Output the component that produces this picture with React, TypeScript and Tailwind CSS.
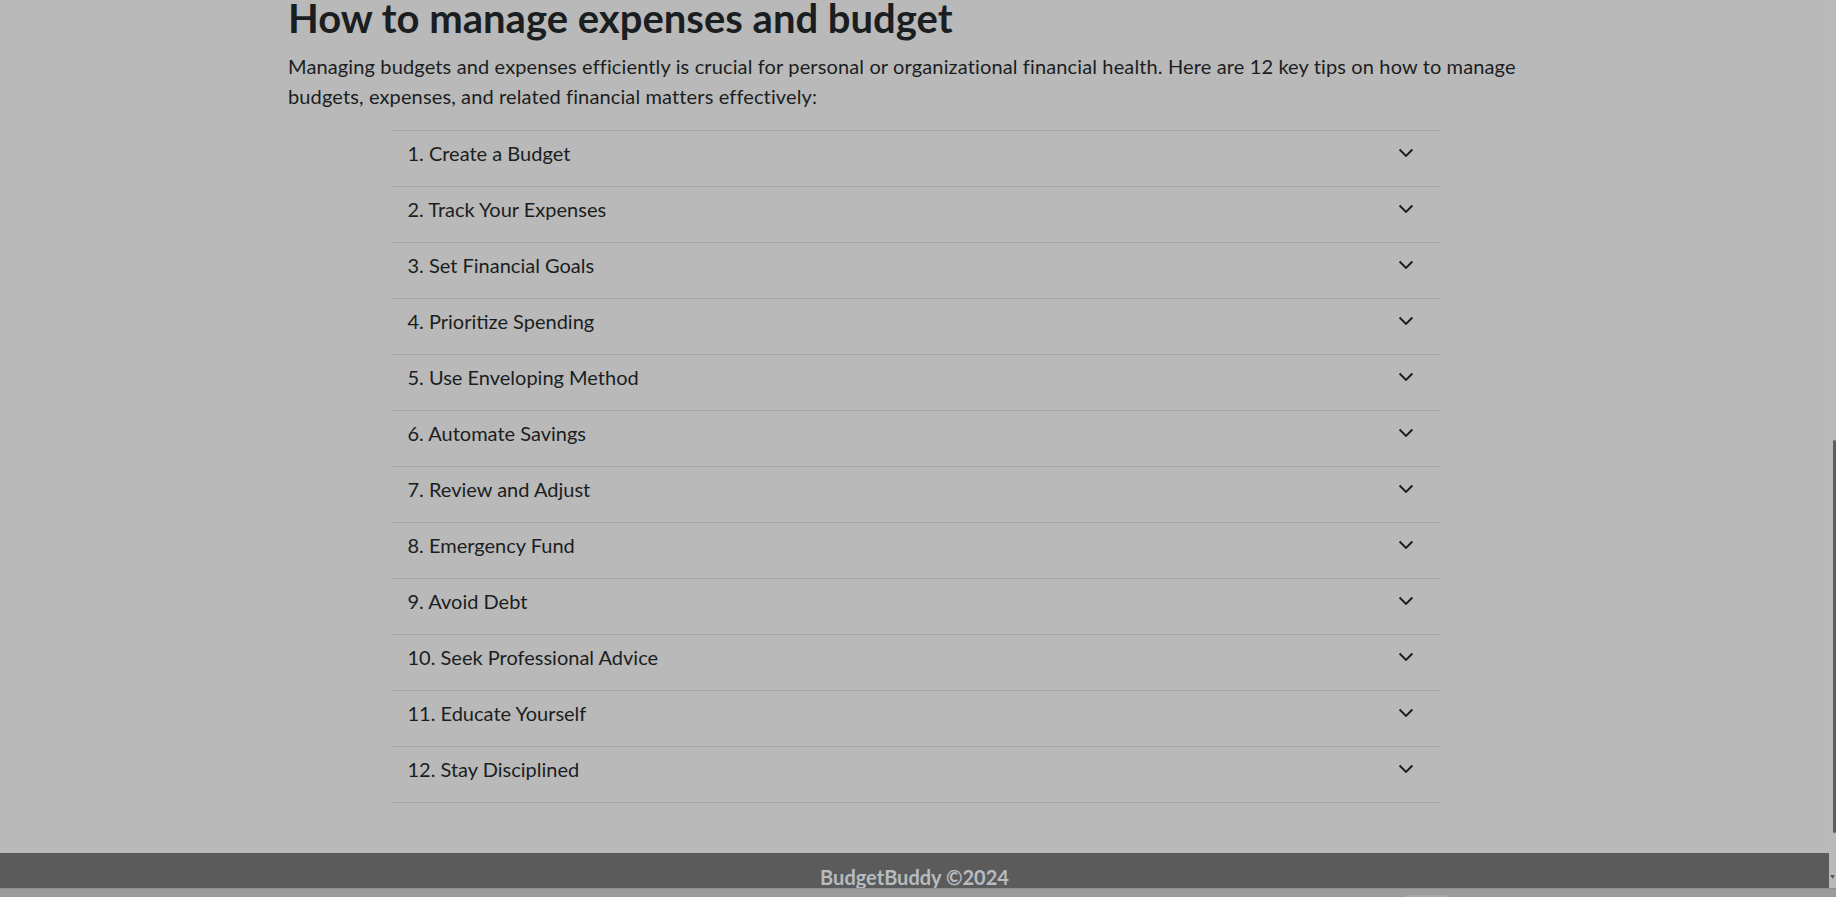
const tips = [
  '1. Create a Budget',
  '2. Track Your Expenses',
  '3. Set Financial Goals',
  '4. Prioritize Spending',
  '5. Use Enveloping Method',
  '6. Automate Savings',
  '7. Review and Adjust',
  '8. Emergency Fund',
  '9. Avoid Debt',
  '10. Seek Professional Advice',
  '11. Educate Yourself',
  '12. Stay Disciplined',
]

function Chevron() {
  return (
    <svg width="16" height="16" viewBox="0 0 16 16" fill="none" className="shrink-0">
      <path d="M2.3 5.2L8 10.9l5.7-5.7" stroke="#1b1e21" strokeWidth="2" strokeLinecap="square" />
    </svg>
  )
}

function TipRow({ label, last }: { label: string; last: boolean }) {
  return (
    <div className={`border-t border-[#a2a5a9] ${last ? 'border-b' : ''}`}>
      <button className="w-full flex items-center justify-between pl-[17px] pr-[25px] pt-[7px] pb-[18px] text-left">
        <span className="text-[20px] leading-[30px]">{label}</span>
        <Chevron />
      </button>
    </div>
  )
}

export default function App() {
  return (
    <div className="h-[897px] flex flex-col bg-[#b9b9b9] text-[#1b1e21] font-[Lato,sans-serif] overflow-hidden">
      <div className="h-[888px] flex overflow-hidden">
        <main className="flex-1 flex flex-col">
          <section className="w-[1253px] mx-auto">
            <h1 className="text-[40px] leading-[36px] font-bold">How to manage expenses and budget</h1>
            <p className="mt-[15px] mb-[19px] text-[20px] leading-[30px] tracking-[0.13px]">
              Managing budgets and expenses efficiently is crucial for personal or organizational financial health. Here
              are 12 key tips on how to manage budgets, expenses, and related financial matters effectively:
            </p>
            <div className="w-[1048px] mx-auto">
              {tips.map((t, i) => (
                <TipRow key={t} label={t} last={i === tips.length - 1} />
              ))}
            </div>
          </section>
          <footer className="mt-[50px] bg-[#5b5b5b] h-[45px] shrink-0 pt-[9px] text-center">
            <span className="text-[20px] leading-[30px] font-bold text-[#b7bcc1]">BudgetBuddy ©2024</span>
          </footer>
        </main>
        <div className="w-[7px] bg-[#bababa] relative">
          <div className="absolute right-0 top-[440px] h-[393px] w-[3px] rounded-full bg-[#5e5e5e]" />
          <svg width="7" height="5" viewBox="0 0 7 5" className="absolute right-0 top-[875px]">
            <path d="M1 0h5L3.5 4z" fill="#5e5e5e" />
          </svg>
        </div>
      </div>
      <div className="h-[9px] bg-[#9b9b9b] border-t border-[#8f8f8f] relative">
        <div className="absolute left-[1404px] top-[6px] w-[45px] h-[4px] rounded-t bg-[#a9a9a9]" />
      </div>
    </div>
  )
}
